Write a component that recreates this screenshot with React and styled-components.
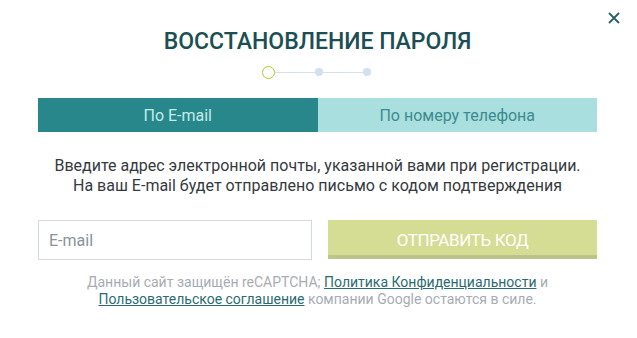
import React from "react";
import styled, { createGlobalStyle } from "styled-components";

const Global = createGlobalStyle`
  body {
    margin: 0;
    background: #fff;
    font-family: Roboto, "Liberation Sans", sans-serif;
  }
`;

const Modal = styled.div`
  position: relative;
  width: 637px;
  height: 338px;
  box-sizing: border-box;
  padding: 28px 40px 0 38px;
  display: flex;
  flex-direction: column;
  align-items: stretch;
`;

const Close = styled.button`
  position: absolute;
  top: 11px;
  right: 16px;
  width: 14px;
  height: 14px;
  padding: 0;
  border: 0;
  background: none;
  cursor: pointer;
`;

const Title = styled.h2`
  margin: 0;
  text-align: center;
  font-size: 23px;
  font-weight: 500;
  line-height: 28px;
  color: #1c4f53;
`;

const Steps = styled.div`
  display: flex;
  align-items: center;
  justify-content: center;
  margin: 9px 0 0 -2px;
  height: 14px;
`;

const Step = styled.span`
  box-sizing: border-box;
  width: ${(p) => (p.$active ? "13px" : "8px")};
  height: ${(p) => (p.$active ? "13px" : "8px")};
  border-radius: 50%;
  background: ${(p) => (p.$active ? "#fff" : "#d3e0ee")};
  border: ${(p) => (p.$active ? "1.5px solid #b4c62e" : "none")};
`;

const Line = styled.span`
  width: 40px;
  height: 1px;
  background: #d6e0ea;
`;

const Tabs = styled.div`
  display: flex;
  margin-top: 19px;
  height: 34px;
`;

const Tab = styled.button`
  flex: 1;
  border: 0;
  margin: 0;
  padding: 0;
  font-family: inherit;
  font-size: 16px;
  background: ${(p) => (p.$active ? "#28878a" : "#aadfe0")};
  color: ${(p) => (p.$active ? "#c3ebeb" : "#3c8b8e")};
  cursor: pointer;
`;

const Intro = styled.p`
  margin: 24px 0 0;
  text-align: center;
  font-size: 16px;
  line-height: 20px;
  color: #353a3f;
`;

const Form = styled.div`
  display: flex;
  gap: 16px;
  margin-top: 24px;
`;

const Input = styled.input`
  box-sizing: border-box;
  width: 274px;
  height: 40px;
  border: 1px solid #d3dadd;
  padding: 0 10px;
  font-family: inherit;
  font-size: 16px;
  color: #333;
  outline: none;
  &::placeholder {
    color: #8a9299;
  }
`;

const Submit = styled.button`
  flex: 1;
  height: 39px;
  border: 0;
  border-bottom: 4px solid #bcc48a;
  background: #d5dc93;
  color: #fff;
  font-family: inherit;
  font-size: 17px;
  letter-spacing: -0.4px;
  text-transform: uppercase;
  padding: 4px 0 0;
  cursor: pointer;
`;

const Note = styled.p`
  margin: 14px 0 0;
  text-align: center;
  font-size: 14px;
  line-height: 17px;
  color: #a7acb2;
`;

const Link = styled.a`
  color: #2b6c70;
  text-decoration: underline;
`;

const App = () => {
  return (
    <>
      <Global />
      <Modal>
        <Close aria-label="Закрыть">
          <svg width="14" height="14" viewBox="0 0 14 14">
            <path d="M2 2L12 12M12 2L2 12" stroke="#2a5f63" strokeWidth="1.8" />
          </svg>
        </Close>
        <Title>ВОССТАНОВЛЕНИЕ ПАРОЛЯ</Title>
        <Steps>
          <Step $active />
          <Line />
          <Step />
          <Line />
          <Step />
        </Steps>
        <Tabs>
          <Tab $active>По E-mail</Tab>
          <Tab>По номеру телефона</Tab>
        </Tabs>
        <Intro>
          Введите адрес электронной почты, указанной вами при регистрации.
          <br />
          На ваш E-mail будет отправлено письмо с кодом подтверждения
        </Intro>
        <Form>
          <Input placeholder="E-mail" />
          <Submit>Отправить код</Submit>
        </Form>
        <Note>
          Данный сайт защищён reCAPTCHA; <Link href="#">Политика Конфиденциальности</Link> и
          <br />
          <Link href="#">Пользовательское соглашение</Link> компании Google остаются в силе.
        </Note>
      </Modal>
    </>
  );
};

export default App;
